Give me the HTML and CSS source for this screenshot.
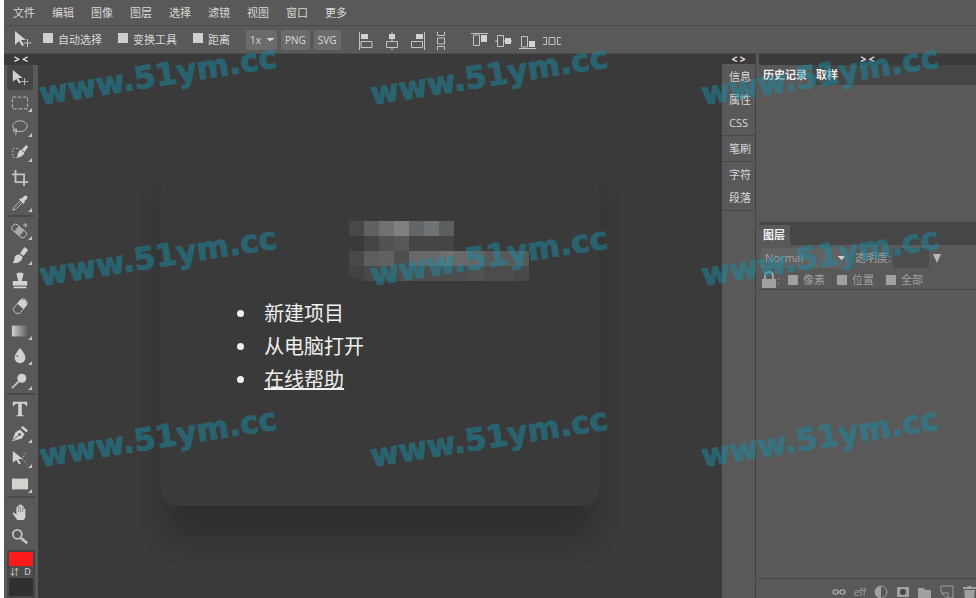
FILE: index.html
```html
<!DOCTYPE html>
<html lang="zh-CN">
<head>
<meta charset="utf-8">
<title>图像编辑器</title>
<link rel="stylesheet" href="styles.css">
</head>
<body>
<div class="app">
  <nav class="menu">
    <button>文件</button><button>编辑</button><button>图像</button><button>图层</button><button>选择</button><button>滤镜</button><button>视图</button><button>窗口</button><button>更多</button>
  </nav>

  <div class="options">
    <svg class="current-tool" width="20" height="20" viewBox="0 0 20 20"><path class="fill" d="M2 1v14l4-4 3 5 2-1-3-5h5z"/><path class="line" d="M14.500 9v8M10.500 13h8"/></svg>
    <label class="check"><input type="checkbox">自动选择</label>
    <label class="check"><input type="checkbox">变换工具</label>
    <label class="check"><input type="checkbox">距离</label>
    <div class="exports">
      <select class="scale" aria-label="缩放"><option>1x</option></select>
      <button class="chip">PNG</button>
      <button class="chip">SVG</button>
    </div>
    <div class="align">
      <button aria-label="左对齐"><svg width="16" height="18" viewBox="0 0 16 18"><path class="line" d="M1.500 0v18M3 9.500h11v6H3z"/><path class="fill" d="M3 2h7v5H3z"/></svg></button>
      <button aria-label="水平居中"><svg width="16" height="18" viewBox="0 0 16 18"><path class="line" d="M8 0v9M8 16v2M2.500 9.500h11v6h-11z"/><path class="fill" d="M5 2h6v5H5z"/></svg></button>
      <button aria-label="右对齐"><svg width="16" height="18" viewBox="0 0 16 18"><path class="line" d="M14.500 0v18M1.500 9.500h11v6h-11z"/><path class="fill" d="M6 2h7v5H6z"/></svg></button>
      <button aria-label="垂直分布"><svg width="10" height="18" viewBox="0 0 10 18"><path class="line" d="M1.500 0v3.500h7V0M1.500 6h7v6h-7zM1.500 18v-3.500h7V18"/></svg></button>
    </div>
    <div class="align">
      <button aria-label="顶对齐"><svg width="18" height="18" viewBox="0 0 18 18"><path class="line" d="M0 1.500h17M2.500 3v10.500h6V3z"/><path class="fill" d="M10 3h6v7h-6z"/></svg></button>
      <button aria-label="垂直居中"><svg width="18" height="18" viewBox="0 0 18 18"><path class="line" d="M0 9h2M8 9h9M2.500 3.500h6v11h-6z"/><path class="fill" d="M10 6h6v6h-6z"/></svg></button>
      <button aria-label="底对齐"><svg width="18" height="18" viewBox="0 0 18 18"><path class="line" d="M0 16.500h17M2.500 15V4.500h6V15z"/><path class="fill" d="M10 9h6v6h-6z"/></svg></button>
      <button aria-label="水平分布"><svg width="18" height="18" viewBox="0 0 18 18"><path class="line" d="M0 5.500h3.500v7H0M6 5.500h6v7H6zM18 5.500h-3.500v7H18"/></svg></button>
    </div>
  </div>

  <div class="work">
    <aside class="tools">
      <button class="fold">&gt; &lt;</button>
      <div class="tool-list">
        <div class="group">
          <button class="tool on" aria-label="移动"><svg viewBox="0 0 20 20"><path class="fill" d="M2 1v13l4-3 3 5 2-1-3-5h5z"/><path class="line" d="M15 10v8M11 14h8"/></svg></button>
          <button class="tool more" aria-label="矩形选框"><svg viewBox="0 0 20 20"><path class="line" stroke-dasharray="4 2" d="M1.500 3.500h17v13h-17z"/></svg></button>
          <button class="tool more" aria-label="套索"><svg viewBox="0 0 20 20"><ellipse class="line" cx="10" cy="8" rx="8" ry="6"/><path class="line" d="M4 11q-3 1-1 3t3-1-1-2q2 3 0 7"/></svg></button>
          <button class="tool more" aria-label="快速选择"><svg viewBox="0 0 20 20"><path class="line" stroke-dasharray="2 2" d="M8 5H2v10h8v-3"/><path class="fill" d="M17 1l2 2-4 6-3-3zM11 6l4 4q-2 4-8 5 0-7 4-9z"/></svg></button>
          <button class="tool" aria-label="裁剪"><svg viewBox="0 0 20 20"><path class="line bold" d="M5 1v13.500H19M1 6h13.500V19"/></svg></button>
          <button class="tool more" aria-label="吸管"><svg viewBox="0 0 20 20"><path class="line" d="M11 7l-8 8-1 3 3-1 8-8"/><path class="fill" d="M10 5l2 0 3-3q4-1 3 3l-3 3v2l-1 1-5-5z"/></svg></button>
        </div>
        <div class="group">
          <button class="tool more" aria-label="修复画笔"><svg viewBox="0 0 20 20"><g transform="rotate(40 9 10)"><rect class="line" x="0" y="6" width="18" height="8" rx="3"/><path class="soft" d="M5 6h8v8H5z"/></g><path class="line" d="M16 1v5M13.500 3.500h5"/></svg></button>
          <button class="tool more" aria-label="画笔"><svg viewBox="0 0 20 20"><path class="fill" d="M15 0l4 3-5 7-4-3zM9 8l4 3q-1 7-11 7 2-3 2-6t5-4z"/></svg></button>
          <button class="tool" aria-label="图章"><svg viewBox="0 0 20 20"><path class="fill" d="M6 2q4-3 8 0l-2 8h6v5H2v-5h6zM3 16h14v2H3z"/></svg></button>
          <button class="tool" aria-label="橡皮擦"><svg viewBox="0 0 20 20"><g transform="rotate(-50 10 10)"><rect class="line" x="1" y="6" width="18" height="9" rx="4"/><path class="fill" d="M10 6h6q5 4 0 9h-6z"/></g></svg></button>
          <button class="tool more" aria-label="渐变"><svg viewBox="0 0 20 20"><defs><linearGradient id="fade"><stop stop-color="#d0d0cc"/><stop offset="1" stop-color="#606060"/></linearGradient></defs><path fill="url(#fade)" d="M1 4h17v12H1z"/></svg></button>
          <button class="tool more" aria-label="模糊"><svg viewBox="0 0 20 20"><path class="fill" d="M10 1q6 7 6 11a6 6 0 0 1-12 0q0-4 6-11z"/><circle fill="#777" cx="7" cy="10" r="1"/></svg></button>
          <button class="tool more" aria-label="减淡"><svg viewBox="0 0 20 20"><circle class="fill" cx="12" cy="7" r="5"/><path class="line bold" d="M9 10l-8 8"/></svg></button>
        </div>
        <div class="group">
          <button class="tool" aria-label="文字"><svg viewBox="0 0 20 20"><path class="fill" d="M2 2h16v5h-1q-1-3-5-3v12q0 1 2 1v1H6v-1q2 0 2-1V4Q4 4 3 7H2z"/></svg></button>
          <button class="tool more" aria-label="钢笔"><svg viewBox="0 0 20 20"><path class="fill" d="M13 1l6 5-2 2-6-5zM10 5l5 5-3 5-11 3L5 8z"/><path d="M2 17l7-6" stroke="#595959"/><circle fill="#595959" cx="9.500" cy="10.500" r="1.500"/></svg></button>
          <button class="tool more" aria-label="路径选择"><svg viewBox="0 0 20 20"><path class="fill" d="M2 1v13l4-3 3 5 2-1-3-5h5z"/><path class="line" stroke-dasharray="2 2" d="M17 3l-5 7 6 6"/></svg></button>
          <button class="tool more" aria-label="矩形"><svg viewBox="0 0 20 20"><path class="fill" d="M1 4h18v12H1z"/></svg></button>
        </div>
        <div class="group">
          <button class="tool" aria-label="抓手"><svg viewBox="0 0 20 20"><path class="fill" d="M7 19l-5-7q0-2 2-1l2 2V5q1-2 2 0V3q1-2 2 0V2q1-1 2 0v2q1-2 2 0v3q1-2 2 0v8q0 2-2 4z"/><path d="M8.500 4v6M10.500 4v6M13 5v5" stroke="#686868" stroke-width=".7"/></svg></button>
          <button class="tool" aria-label="缩放工具"><svg viewBox="0 0 20 20"><circle class="line bold" cx="7" cy="7" r="5"/><path class="line thick" d="M11 11l7 6"/></svg></button>
        </div>
        <div class="swatches">
          <button class="front" aria-label="前景色"></button>
          <div class="swap"><button>⇵</button><button>D</button></div>
        </div>
      </div>
    </aside>

    <main class="canvas">
      <section class="card">
        <svg class="mosaic" width="180" height="60" viewBox="0 0 12 4" shape-rendering="crispEdges" aria-hidden="true">
          <path fill="#484848" d="M0 0h1v1H0zM0 2h1v1H0z"/><path fill="#616161" d="M1 0h1v1H1zM2 2h1v1H2z"/><path fill="#71716e" d="M2 0h1v1H2z"/><path fill="#808080" d="M3 0h1v1H3z"/><path fill="#646568" d="M4 0h1v1H4z"/><path fill="#6e7373" d="M5 0h1v1H5z"/><path fill="#5d5f5c" d="M6 0h1v1H6zM1 2h1v1H1z"/>
          <path fill="#454545" d="M1 1h1v1H1zM4 1h3v1H4z"/><path fill="#525252" d="M2 1h1v1H2z"/><path fill="#545856" d="M3 1h1v1H3z"/>
          <path fill="#4e4e4c" d="M3 2h1v1H3z"/><path fill="#686868" d="M4 2h2v1H4zM7 2h1v1H7z"/><path fill="#6e6e6e" d="M6 2h1v1H6z"/><path fill="#636363" d="M8 2h1v1H8z"/><path fill="#595959" d="M9 2h3v1H9z"/>
          <path fill="#42423f" d="M0 3h1v1L0 3.700z"/><path fill="#494949" d="M1 3h2v1H1zM11 3h1v1h-1z"/><path fill="#4e4e4e" d="M3 3h5v1H3z"/><path fill="#505251" d="M8 3h1v1H8z"/><path fill="#4b4c4b" d="M9 3h2v1H9z"/>
        </svg>
        <ul class="start">
          <li>新建项目</li>
          <li>从电脑打开</li>
          <li><a href="#help">在线帮助</a></li>
        </ul>
      </section>
    </main>

    <aside class="side">
      <button class="fold">&lt; &gt;</button>
      <div class="side-list">
        <div class="side-group"><button>信息</button><button>属性</button><button>CSS</button></div>
        <div class="side-group"><button>笔刷</button></div>
        <div class="side-group"><button>字符</button><button>段落</button></div>
      </div>
    </aside>

    <aside class="panels">
      <section class="history">
        <button class="fold">&gt; &lt;</button>
        <div class="tabs"><button class="tab on">历史记录</button><button class="tab">取样</button></div>
      </section>
      <section class="layers">
        <div class="tabs"><button class="tab on">图层</button></div>
        <div class="blend">
          <select aria-label="混合模式"><option>Normal</option></select>
          <label for="opacity">透明度:</label>
          <input id="opacity" type="text">
          <button aria-label="选择透明度"><svg width="8" height="9" viewBox="0 0 8 9"><path d="M0 0h8L4 9z"/></svg></button>
        </div>
        <div class="locks">
          <svg width="14" height="18" viewBox="0 0 14 18"><path fill="none" stroke="#a0a0a0" stroke-width="2" d="M3 9V5q0-4 4-4t4 4v4"/><path fill="#a0a0a0" d="M0 8h14v9H0z"/></svg>
          <span>:</span>
          <label class="check"><input type="checkbox">像素</label>
          <label class="check"><input type="checkbox">位置</label>
          <label class="check"><input type="checkbox">全部</label>
        </div>
        <div class="layer-list"></div>
        <div class="actions">
          <button aria-label="链接"><svg width="14" height="14" viewBox="0 0 14 14"><g fill="none" stroke="#a0a0a0" stroke-width="1.500"><rect x="1" y="5" width="5" height="4" rx="2"/><rect x="8" y="5" width="5" height="4" rx="2"/><path d="M5 7h4"/></g></svg></button>
          <button>eff</button>
          <button aria-label="调整"><svg width="14" height="14" viewBox="0 0 14 14"><circle cx="7" cy="7" r="6" fill="none" stroke="#a0a0a0"/><path fill="#a0a0a0" d="M7 1a6 6 0 0 0 0 12z"/></svg></button>
          <button aria-label="蒙版"><svg width="14" height="14" viewBox="0 0 14 14"><path fill="#a0a0a0" d="M1 2h12v10H1z"/><circle cx="7" cy="7" r="3" fill="#484848"/></svg></button>
          <button aria-label="文件夹"><svg width="14" height="14" viewBox="0 0 14 14"><path fill="#a0a0a0" d="M0 3h6l1 2h6v8H0z"/></svg></button>
          <button aria-label="新建图层"><svg width="14" height="14" viewBox="0 0 14 14"><path fill="none" stroke="#a0a0a0" d="M1 7V1h12v12H8V8H1l6 5"/></svg></button>
          <button aria-label="删除"><svg width="14" height="14" viewBox="0 0 14 14"><path fill="#a0a0a0" d="M1 2h4l1-1h3l1 1h4v2H1zM2 5h11l-1 9H3z"/></svg></button>
        </div>
      </section>
    </aside>
  </div>

  <div class="marks" aria-hidden="true">
    <span>www.51ym.cc</span><span>www.51ym.cc</span><span>www.51ym.cc</span>
    <span>www.51ym.cc</span><span>www.51ym.cc</span><span>www.51ym.cc</span>
    <span>www.51ym.cc</span><span>www.51ym.cc</span><span>www.51ym.cc</span>
  </div>
</div>
</body>
</html>
```
FILE: styles.css
```css
:root {
  --panel: #595959;
  --dark: #3a3a3a;
  --tab: #464646;
  --rule: #484848;
  --text: #d8d8d6;
  --muted: #a0a0a0;
}
* { box-sizing: border-box; }
body {
  margin: 0;
  background: #fafbff;
  color: var(--text);
  font: 11px/16px "Open Sans", "Noto Sans CJK SC", sans-serif;
}
button, select, input { font: inherit; color: inherit; }
button {
  padding: 0;
  border: 0;
  background: none;
  white-space: nowrap;
}
svg { display: block; }
.fill { fill: #d2d2ce; }
.soft { fill: #a8a8a6; }
.line { fill: none; stroke: #c4c4c0; stroke-width: 1; }
.line.bold { stroke-width: 2; }
.line.thick { stroke-width: 3; }

.app {
  position: relative;
  display: flex;
  flex-direction: column;
  height: 100vh;
  margin-left: 4px;
  overflow: hidden;
  background: var(--panel);
}
.menu {
  display: flex;
  gap: 17px;
  height: 26px;
  padding: 0 9px;
  border-bottom: 1px solid #4c4c4c;
}
.options {
  display: flex;
  align-items: center;
  height: 28px;
  padding: 0 9px;
  border-bottom: 1px solid #4c4c4c;
}
.current-tool { margin-right: 10px; }
.check {
  display: flex;
  align-items: center;
  gap: 5px;
  margin-right: 16px;
}
.check input {
  appearance: none;
  width: 10px;
  height: 10px;
  margin: 0;
  background: #d0d0cc;
}
.options .check input { margin-bottom: 3px; }
.exports { display: flex; gap: 4px; }
.chip, .scale {
  height: 20px;
  border: 0;
  border-radius: 2px;
  background: #6b6b6b;
  font-size: 10px;
}
.chip { padding: 0 4px; }
.scale, .blend select {
  appearance: none;
  background-image: linear-gradient(to bottom left, #d0d0d0 50%, transparent 50%), linear-gradient(to bottom right, #d0d0d0 50%, transparent 50%);
  background-position: right 7px center, right 3px center;
  background-repeat: no-repeat;
  background-size: 4px 4px;
}
.scale { width: 31px; padding: 0 4px; }
.align {
  display: flex;
  gap: 10px;
  margin: 2px 0 0 17px;
}
.align + .align { gap: 6px; margin-left: 25px; }

.work { display: flex; flex: 1; min-height: 0; }
.fold {
  display: block;
  width: 100%;
  height: 11px;
  background: var(--dark);
  color: #f0f0f0;
  font: bold 10px/11px "Open Sans", sans-serif;
  text-align: center;
}
.tools {
  display: flex;
  flex-direction: column;
  width: 34px;
}
.tool-list { padding: 0 3px; }
.group + .group, .swatches { margin-top: 1px; }
.group { border-bottom: 2px solid var(--rule); }
.group:nth-child(4) { border: 0; }
.tool {
  position: relative;
  display: grid;
  place-items: center;
  width: 26px;
  height: 25px;
  border-radius: 2px;
}
.tool svg { width: 18px; height: 18px; }
.tool.on { background: #454545; }
.more::after {
  content: "";
  position: absolute;
  right: 1px;
  bottom: 3px;
  border: 2px solid;
  border-color: transparent #c4c4c4 #c4c4c4 transparent;
}
.swatches {
  height: 48px;
  border: 2px solid #454545;
  background: #303030;
}
.front {
  display: block;
  width: 100%;
  height: 14px;
  background: #fd1a1a;
}
.swap {
  display: flex;
  justify-content: space-between;
  background: #4c4c4c;
  font-size: 9px;
  line-height: 12px;
}
.swap button { width: 11px; }

.canvas {
  display: flex;
  flex: 1;
  align-items: center;
  justify-content: center;
  background: var(--dark);
}
.card {
  width: 64%;
  padding: 74px 70px 110px;
  border-radius: 16px;
  background: var(--dark);
  box-shadow: 0 36px 28px -4px rgba(0, 0, 0, .2);
}
.mosaic { margin-left: 118px; }
.start {
  margin: 16px 0 0;
  padding: 0 6px;
  color: #f0f0ee;
  font-size: 20px;
  line-height: 33px;
  list-style: none;
}
.start li { display: flex; align-items: center; gap: 20px; }
.start li::before {
  content: "";
  width: 7px;
  height: 7px;
  border-radius: 50%;
  background: #f0f0ee;
}
.start a { color: inherit; }

.side {
  width: 34px;
  border-right: 1px solid #424242;
}
.side .fold { height: 10px; }
.side-group {
  display: grid;
  padding: 1px 0;
  border-bottom: 1px solid var(--rule);
}
.side-group button {
  height: 23px;
  padding-left: 7px;
  text-align: left;
}

.panels {
  display: flex;
  flex-direction: column;
  width: 217px;
  margin-left: 3px;
}
.history { height: 168px; }
.layers { display: flex; flex: 1; flex-direction: column; }
.tabs { display: flex; background: var(--tab); }
.tab {
  height: 20px;
  padding: 0 5px 0 4px;
  color: #f0f0f0;
  font-weight: bold;
}
.tab.on { background: var(--panel); }
.layers .tabs { padding-top: 3px; }
.layers { color: var(--muted); }
.blend {
  display: flex;
  align-items: center;
  height: 26px;
  padding: 0 2px;
}
.blend select {
  width: 88px;
  height: 20px;
  margin-right: 6px;
  padding: 0 4px;
  border: 0;
  border-radius: 2px;
  background-color: #626262;
}
.blend input {
  width: 36px;
  height: 20px;
  margin: 0 4px 0 2px;
  border: 0;
  border-radius: 2px;
  background: #4c4c4c;
}
.blend svg { fill: #b8b8b8; }
.locks {
  display: flex;
  align-items: center;
  height: 19px;
  padding: 0 3px;
  border-bottom: 1px solid var(--rule);
}
.locks span { margin: 0 8px 0 1px; }
.locks .check { margin-right: 12px; }
.locks input { background: var(--muted); }
.layer-list { flex: 1; }
.actions {
  display: flex;
  align-items: center;
  justify-content: flex-end;
  gap: 8px;
  height: 20px;
  padding-top: 6px;
  border-top: 1px solid var(--rule);
  font-size: 10px;
}

/* Repeating site mark laid over the whole editor */
.marks {
  position: absolute;
  inset: 0;
  display: grid;
  grid-template-columns: repeat(3, 331px);
  grid-auto-rows: 181px;
  padding: 57px 0 0 34px;
  overflow: hidden;
  pointer-events: none;
  opacity: .5;
  color: #1a8ca5;
  font: bold 31px/36px "DejaVu Sans", sans-serif;
  -webkit-text-stroke: 1px #1a8ca5;
}
.marks span {
  justify-self: start;
  align-self: start;
  transform: rotate(-9deg);
}
```
